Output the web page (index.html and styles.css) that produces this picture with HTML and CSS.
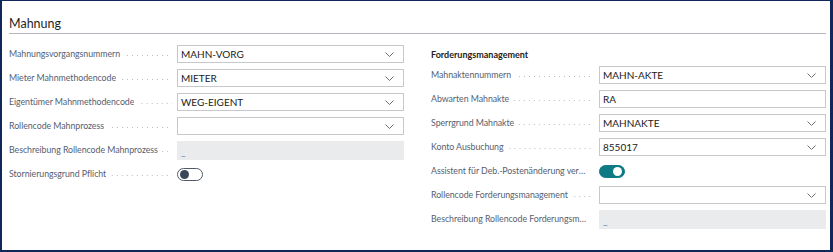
FILE: index.html
```html
<!DOCTYPE html>
<html lang="de">
  <head>
    <meta charset="UTF-8" />
    <meta name="viewport" content="width=device-width, initial-scale=1.0" />
    <title>Mahnung</title>
    <link rel="stylesheet" href="styles.css">
  </head>

  <body>
    <div id="frame">
      <h2 class="section-title">Mahnung</h2>
      <div class="columns">
        <div class="column">
          <div class="field">
            <div class="caption"><span class="text">Mahnungsvorgangsnummern</span><span class="leader"></span></div>
            <div class="box select"><span class="value">MAHN-VORG</span><svg class="chev" viewBox="0 0 9 5"><polyline points="0.5,0.5 4.5,4.5 8.5,0.5" /></svg></div>
          </div>
          <div class="field">
            <div class="caption"><span class="text">Mieter Mahnmethodencode</span><span class="leader"></span></div>
            <div class="box select"><span class="value">MIETER</span><svg class="chev" viewBox="0 0 9 5"><polyline points="0.5,0.5 4.5,4.5 8.5,0.5" /></svg></div>
          </div>
          <div class="field">
            <div class="caption"><span class="text">Eigentümer Mahnmethodencode</span><span class="leader"></span></div>
            <div class="box select"><span class="value">WEG-EIGENT</span><svg class="chev" viewBox="0 0 9 5"><polyline points="0.5,0.5 4.5,4.5 8.5,0.5" /></svg></div>
          </div>
          <div class="field">
            <div class="caption"><span class="text">Rollencode Mahnprozess</span><span class="leader"></span></div>
            <div class="box select"><span class="value"></span><svg class="chev" viewBox="0 0 9 5"><polyline points="0.5,0.5 4.5,4.5 8.5,0.5" /></svg></div>
          </div>
          <div class="field">
            <div class="caption"><span class="text">Beschreibung Rollencode Mahnprozess</span><span class="leader"></span></div>
            <div class="box readonly"><span class="value">_</span></div>
          </div>
          <div class="field">
            <div class="caption"><span class="text">Stornierungsgrund Pflicht</span><span class="leader"></span></div>
            <div class="switch-cell"><span class="switch"></span></div>
          </div>
        </div>

        <div class="column">
          <div class="group-title">Forderungsmanagement</div>
          <div class="field">
            <div class="caption"><span class="text">Mahnaktennummern</span><span class="leader"></span></div>
            <div class="box select"><span class="value">MAHN-AKTE</span><svg class="chev" viewBox="0 0 9 5"><polyline points="0.5,0.5 4.5,4.5 8.5,0.5" /></svg></div>
          </div>
          <div class="field">
            <div class="caption"><span class="text">Abwarten Mahnakte</span><span class="leader"></span></div>
            <div class="box"><span class="value">RA</span></div>
          </div>
          <div class="field">
            <div class="caption"><span class="text">Sperrgrund Mahnakte</span><span class="leader"></span></div>
            <div class="box select"><span class="value">MAHNAKTE</span><svg class="chev" viewBox="0 0 9 5"><polyline points="0.5,0.5 4.5,4.5 8.5,0.5" /></svg></div>
          </div>
          <div class="field">
            <div class="caption"><span class="text">Konto Ausbuchung</span><span class="leader"></span></div>
            <div class="box select"><span class="value">855017</span><svg class="chev" viewBox="0 0 9 5"><polyline points="0.5,0.5 4.5,4.5 8.5,0.5" /></svg></div>
          </div>
          <div class="field">
            <div class="caption"><span class="text">Assistent für Deb.-Postenänderung verwenden</span><span class="leader"></span></div>
            <div class="switch-cell"><span class="switch on"></span></div>
          </div>
          <div class="field">
            <div class="caption"><span class="text">Rollencode Forderungsmanagement</span><span class="leader"></span></div>
            <div class="box select"><span class="value"></span><svg class="chev" viewBox="0 0 9 5"><polyline points="0.5,0.5 4.5,4.5 8.5,0.5" /></svg></div>
          </div>
          <div class="field">
            <div class="caption"><span class="text">Beschreibung Rollencode Forderungsmanagement</span><span class="leader"></span></div>
            <div class="box readonly"><span class="value">_</span></div>
          </div>
        </div>
      </div>
    </div>
  </body>
</html>
```

FILE: styles.css
```css
body {
  margin: 0;
  background-color: white;
  font-family: Lato, "Open Sans", sans-serif;
}

#frame {
  box-sizing: border-box;
  width: 833px;
  height: 252px;
  border: 2px solid #10275a;
  border-top-width: 1px;
  border-right-width: 3px;
  padding: 15px 4px 0 7px;
}

.section-title {
  margin: 0;
  font-size: 12.5px;
  line-height: 16px;
  font-weight: 400;
  color: #1f1f1f;
  padding-bottom: 1px;
  border-bottom: 1px solid #b4b8be;
}

.columns {
  display: grid;
  grid-template-columns: 395px 395px;
  column-gap: 27px;
  padding-top: 8px;
}

.group-title {
  box-sizing: border-box;
  height: 21px;
  padding-top: 6px;
  line-height: 14px;
  font-size: 9px;
  font-weight: 700;
  color: #212121;
}

.field {
  display: grid;
  grid-template-columns: 1fr 227px;
  align-items: center;
  height: 24px;
}

.caption {
  display: flex;
  align-items: center;
  min-width: 0;
  font-size: 8.8px;
  letter-spacing: -0.05px;
  color: #566070;
}

.caption .text {
  max-width: 157px;
  white-space: nowrap;
  overflow: hidden;
  text-overflow: ellipsis;
  line-height: 14px;
}

.leader {
  flex: 1;
  min-width: 2px;
  height: 1px;
  margin: 3px 5px 0 4px;
  background-image: linear-gradient(to right, #b9bcc2 1px, transparent 1px);
  background-size: 5px 1px;
  background-repeat: repeat-x;
  background-position: right;
}

.box {
  box-sizing: border-box;
  display: flex;
  align-items: center;
  height: 18px;
  padding: 0 9px 0 3px;
  border: 1px solid #c6c8cc;
  font-size: 10px;
  color: #212121;
}

.box .value {
  flex: 1;
}

.box.readonly {
  height: 19px;
  border: none;
  background-color: #eaebed;
  padding-left: 4px;
  color: #5f86b0;
}

.box.readonly .value {
  margin-top: 2px;
  line-height: 12px;
}

.chev {
  width: 9px;
  height: 5px;
  fill: none;
  stroke: #6e6e6e;
  stroke-width: 1;
}

.switch-cell {
  display: flex;
  align-items: center;
}

.switch {
  position: relative;
  box-sizing: border-box;
  width: 26px;
  height: 13px;
  border: 1px solid #505a68;
  border-radius: 7px;
}

.switch::after {
  content: "";
  position: absolute;
  top: 1px;
  left: 2px;
  width: 9px;
  height: 9px;
  border-radius: 50%;
  background-color: #3a475a;
}

.switch.on {
  border-color: #0e7a84;
  background-color: #0e7a84;
}

.switch.on::after {
  left: auto;
  right: 2px;
  background-color: white;
}
```
